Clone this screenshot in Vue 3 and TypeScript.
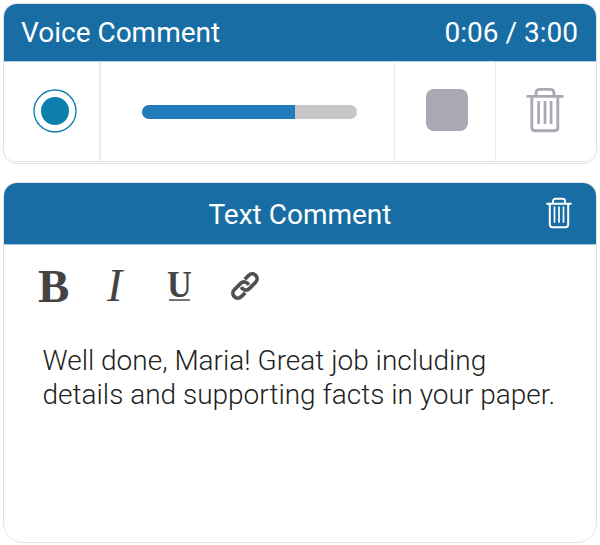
<script setup lang="ts">
import { ref, computed } from 'vue'

const elapsed = ref('0:06')
const limit = ref('3:00')
const progress = ref(71.6)
const progressWidth = computed(() => `${progress.value}%`)
const lines = ref<string[]>([
  'Well done, Maria! Great job including',
  'details and supporting facts in your paper.',
])
</script>

<template>
  <main class="page">
    <section class="card voice">
      <header class="bar">
        <span class="title">Voice Comment</span>
        <span class="time">{{ elapsed }} / {{ limit }}</span>
      </header>
      <div class="controls">
        <button class="cell record" aria-label="Record">
          <svg width="44" height="44" viewBox="0 0 44 44">
            <circle cx="22" cy="22" r="21" fill="none" stroke="#0d7fae" stroke-width="1.4" />
            <circle cx="22" cy="22" r="14" fill="#0d7fae" />
          </svg>
        </button>
        <div class="cell track-cell">
          <div class="track"><div class="fill" :style="{ width: progressWidth }"></div></div>
        </div>
        <button class="cell stop" aria-label="Stop"><span class="square"></span></button>
        <button class="cell trash" aria-label="Delete voice comment">
          <svg width="38" height="46" viewBox="0 0 38 46" fill="none" stroke="#a9a9b3">
            <path d="M.5 9.3H37.5" stroke-width="2.8" />
            <path d="M10 9V6.2Q10 2.3 14 2.3H24Q28 2.3 28 6.2V9" stroke-width="2.8" />
            <path d="M5.8 9.5V40.5Q5.8 43.7 9 43.7H28.6Q31.8 43.7 31.8 40.5V9.5" stroke-width="2.9" />
            <path d="M12.6 14V37M19 14V37M25.1 14V37" stroke-width="2.7" />
          </svg>
        </button>
      </div>
    </section>

    <section class="card text">
      <header class="bar">
        <span class="title">Text Comment</span>
        <button class="delete" aria-label="Delete text comment">
          <svg width="26" height="32" viewBox="0 0 26 32" fill="none" stroke="#fff">
            <path d="M.3 6.8H25.7" stroke-width="2" />
            <path d="M7 6.5V4.2Q7 1.8 9.7 1.8H16.3Q19 1.8 19 4.2V6.5" stroke-width="1.9" />
            <path d="M3.8 7V27.5Q3.8 30.2 6.5 30.2H19.5Q22.2 30.2 22.2 27.5V7" stroke-width="2" />
            <path d="M8.5 9.5V25.8M13 9.5V25.8M17.5 9.5V25.8" stroke-width="1.7" />
          </svg>
        </button>
      </header>
      <div class="tools">
        <button class="tool bold">B</button>
        <button class="tool italic">I</button>
        <button class="tool underline"><span class="letter">U</span><span class="rule"></span></button>
        <button class="tool link" aria-label="Link">
          <svg width="28" height="28" viewBox="-14 -14 28 28" fill="none" stroke="#505153" stroke-width="3.7">
            <g transform="rotate(-45)">
              <path d="M-4.6 4.9H-10.2A4.9 4.9 0 0 1 -10.2 -4.9H-1.2A4.9 4.9 0 0 1 3.3 1.9" />
              <path d="M4.6 -4.9H10.2A4.9 4.9 0 0 1 10.2 4.9H1.2A4.9 4.9 0 0 1 -3.3 -1.9" />
            </g>
          </svg>
        </button>
      </div>
      <div class="message">
        <div v-for="(line, i) in lines" :key="i" class="line">{{ line }}</div>
      </div>
    </section>
  </main>
</template>

<style>
body {
  background: #fff;
}
</style>

<style scoped>
.page {
  box-sizing: border-box;
  width: 600px;
  height: 545px;
  padding: 3px 3px 2px;
  display: flex;
  flex-direction: column;
  gap: 18px;
  font-family: Roboto, "Liberation Sans", sans-serif;
}
button {
  border: 0;
  padding: 0;
  margin: 0;
  background: none;
  color: inherit;
}
svg {
  display: block;
}
.card {
  box-sizing: border-box;
  border: 1px solid #e2e3e5;
  background: #fff;
  overflow: hidden;
  display: flex;
  flex-direction: column;
}
.voice {
  height: 161px;
  border-radius: 14px;
  border-bottom: 3px double #e6e6e7;
}
.text {
  height: 361px;
  border-radius: 14px 14px 20px 20px;
}
.bar {
  box-sizing: border-box;
  background: #186da4;
  color: #fff;
  display: flex;
  align-items: center;
  font-size: 28px;
  line-height: 33px;
  white-space: pre;
}
.voice .bar {
  height: 58px;
  padding: 0 18px 1px 17px;
  justify-content: space-between;
  border-bottom: 1px solid #b9cfdf;
}
.controls {
  flex: 1;
  display: grid;
  grid-template-columns: 95px 295px 101px 1fr;
}
.cell {
  box-sizing: border-box;
  display: flex;
  align-items: center;
  justify-content: center;
}
.cell + .cell {
  border-left: 1px solid #e7e7e8;
}
.controls .track-cell {
  border-left: 2px solid #ededee;
}
.record {
  padding: 0 0 2px 7px;
}
.track {
  width: 215px;
  height: 14px;
  margin-left: 3px;
  border-radius: 7px;
  background: #c7c7c7;
  overflow: hidden;
}
.fill {
  height: 100%;
  background: #217aba;
}
.square {
  width: 42px;
  height: 42px;
  border-radius: 8px;
  background: #a9a9b3;
  margin: 0 0 3px 3px;
}
.trash {
  padding: 0 2px 3px 0;
}
.text .bar {
  height: 62px;
  border-bottom: 1px solid #a6c4d9;
  display: grid;
  grid-template-columns: 1fr auto 1fr;
  padding: 2px 24px 0 24px;
}
.text .title {
  grid-column: 2;
}
.delete {
  justify-self: end;
  margin-top: -4px;
}
.tools {
  display: flex;
  height: 82px;
  padding-left: 34px;
  align-items: center;
  font-family: "Liberation Serif", serif;
  color: #444;
}
.tool {
  font-family: inherit;
  display: flex;
  align-items: center;
  line-height: 1;
}
.bold {
  width: 68px;
  font-size: 47px;
  font-weight: 700;
}
.italic {
  width: 61px;
  padding-left: 1px;
  box-sizing: border-box;
  font-size: 46px;
  font-style: italic;
}
.underline {
  width: 64px;
  flex-direction: column;
  align-items: flex-start;
}
.letter {
  font-size: 37px;
  font-weight: 700;
  line-height: 28px;
  transform: scaleX(0.93);
  transform-origin: left;
}
.rule {
  width: 21px;
  height: 2px;
  margin-left: 2px;
  background: #777;
}
.message {
  padding: 17px 0 0 38.5px;
  color: #231f20;
  font-size: 28px;
  font-weight: 300;
  line-height: 34px;
  white-space: pre;
}
</style>
